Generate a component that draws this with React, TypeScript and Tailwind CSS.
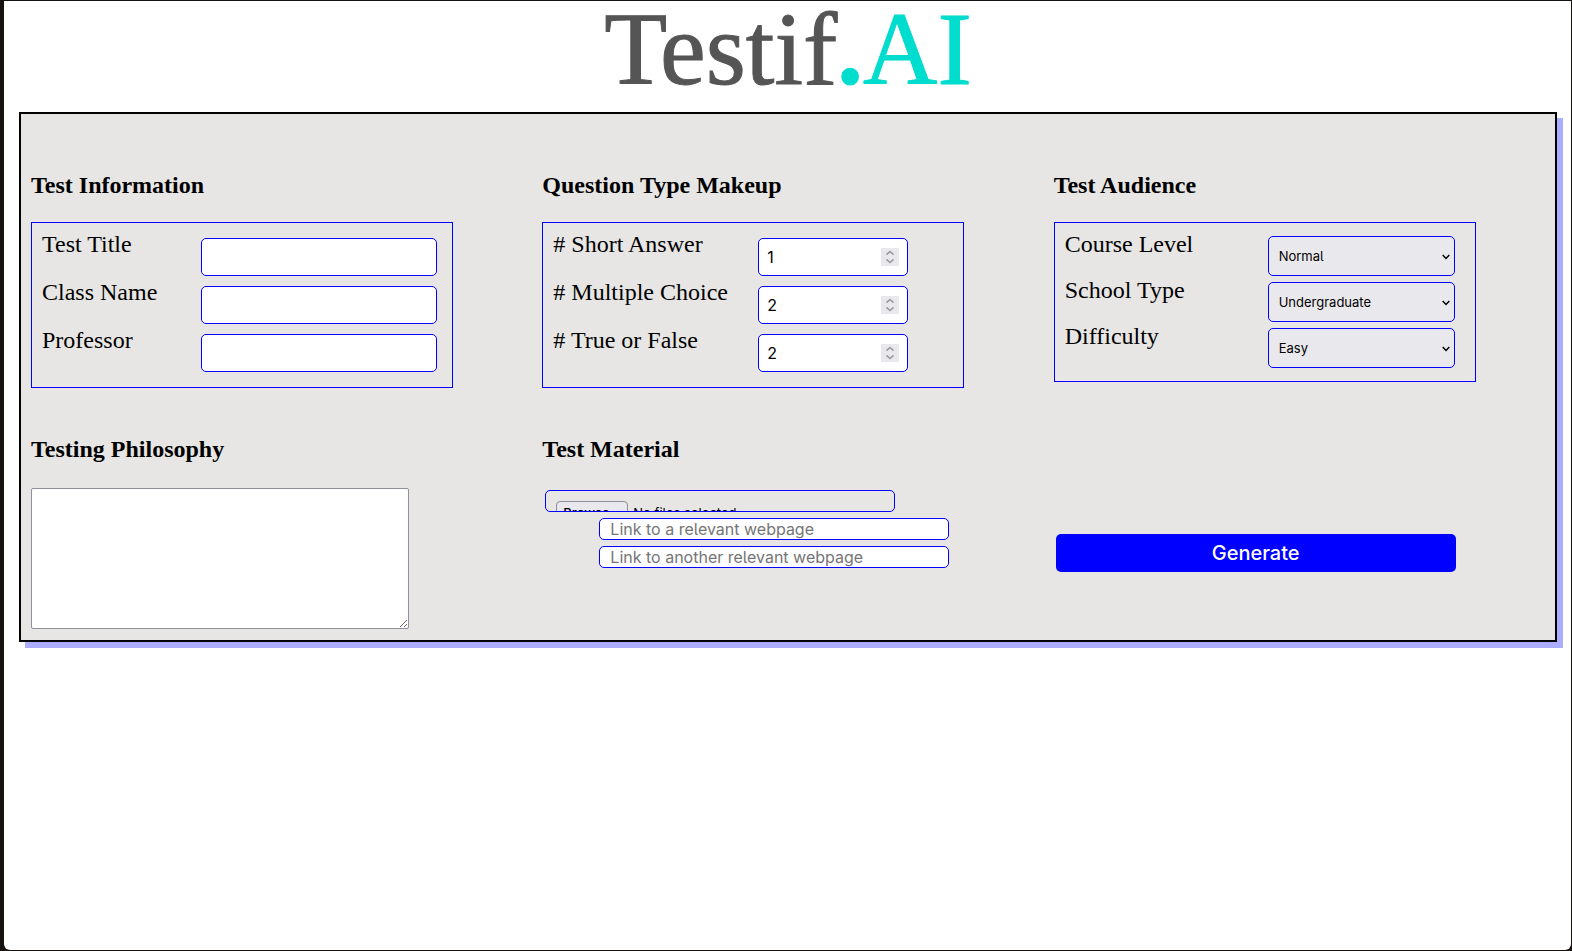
import type { ReactNode } from "react";

const heading = "text-2xl leading-7 font-bold";
const uiFont = "font-['Inter',sans-serif] [font-feature-settings:'cv05']";
const field = "border border-[#0000ff] rounded-[5px] bg-white text-base outline-none";
const rowLabel = "shrink-0 text-2xl leading-[22px] [text-rendering:optimizeLegibility]";

function Fieldset({ title, children }: { title: string; children: ReactNode }) {
  return (
    <section className="pl-2.5">
      <h2 className={heading}>{title}</h2>
      <div className="mt-[23px] w-[422px] max-w-full border border-[#0000ff] p-2.5">{children}</div>
    </section>
  );
}

function TextRow({ id, label }: { id: string; label: string }) {
  return (
    <div className="flex items-start">
      <label htmlFor={id} className={`w-[159px] ${rowLabel}`}>{label}</label>
      <input id={id} type="text" className={`my-[5px] h-[38px] w-[236px] min-w-0 px-2 ${field} ${uiFont}`} />
    </div>
  );
}

function NumberRow({ id, label, value }: { id: string; label: string; value: number }) {
  return (
    <div className="flex items-start">
      <label htmlFor={id} className={`w-[205px] ${rowLabel}`}>{label}</label>
      <div className={`my-[5px] flex h-[38px] w-[150px] items-center px-2 ${field}`}>
        <input
          id={id}
          type="number"
          defaultValue={value}
          className={`min-w-0 flex-1 text-base outline-none [appearance:textfield] [&::-webkit-inner-spin-button]:appearance-none ${uiFont}`}
        />
        <svg viewBox="0 0 18 18" className="h-[18px] w-[18px] bg-[#e9e9ed]" fill="none" stroke="#9a9aa5" strokeWidth="1.6" aria-hidden="true">
          <path d="M5.5 6.7 9 3.5l3.5 3.2M5.5 11.3 9 14.5l3.5-3.2" />
        </svg>
      </div>
    </div>
  );
}

function SelectRow({ id, label, options }: { id: string; label: string; options: string[] }) {
  return (
    <div className="flex items-start">
      <label htmlFor={id} className={`w-[203px] ${rowLabel}`}>{label}</label>
      <div className="my-[3px] grid w-[187px] items-center">
        <select
          id={id}
          className={`col-start-1 row-start-1 h-10 w-full appearance-none rounded-[5px] border border-[#0000ff] bg-[#e9e9ed] px-2.5 pt-0.5 text-[13px] ${uiFont}`}
        >
          {options.map((o) => (
            <option key={o}>{o}</option>
          ))}
        </select>
        <svg viewBox="0 0 8 6" className="pointer-events-none col-start-1 row-start-1 mt-0.5 mr-[5px] h-1.5 w-2 justify-self-end" fill="none" stroke="#000" strokeWidth="1.5" aria-hidden="true">
          <path d="M.7 1 4 4.4 7.3 1" />
        </svg>
      </div>
    </div>
  );
}

export default function App() {
  return (
    <div className="flex min-h-screen flex-col bg-[#15120f] pt-px pr-px pb-px pl-1 font-['Liberation_Serif',serif] text-black">
      <main className="flex-1 rounded-b-md bg-white pr-3.5 pl-[15px]">
        <h1 className="h-[111px] text-center text-[103px] leading-24 text-[#555555] [-webkit-text-stroke:1px_currentColor]">
          Testif<span className="text-[#00dccd]"><b>.</b>AI</span>
        </h1>
        <form
          onSubmit={(e) => e.preventDefault()}
          className="grid grid-cols-3 gap-y-[47px] border-2 border-black bg-[#e7e6e4] pt-[57px] pb-[11px] shadow-[6px_6px_0_#adadff]"
        >
          <Fieldset title="Test Information">
            <TextRow id="title" label="Test Title" />
            <TextRow id="class" label="Class Name" />
            <TextRow id="professor" label="Professor" />
          </Fieldset>
          <Fieldset title="Question Type Makeup">
            <NumberRow id="short" label="# Short Answer" value={1} />
            <NumberRow id="multiple" label="# Multiple Choice" value={2} />
            <NumberRow id="truefalse" label="# True or False" value={2} />
          </Fieldset>
          <Fieldset title="Test Audience">
            <SelectRow id="level" label="Course Level" options={["Normal", "Honors"]} />
            <SelectRow id="school" label="School Type" options={["Undergraduate", "Graduate"]} />
            <SelectRow id="difficulty" label="Difficulty" options={["Easy", "Medium", "Hard"]} />
          </Fieldset>

          <section className="pl-2.5">
            <h2 className={heading}>
              <label htmlFor="philosophy">Testing Philosophy</label>
            </h2>
            <textarea id="philosophy" className="mt-[25px] block h-[141px] w-[378px] max-w-full resize rounded-xs border border-[#8f8f9d] bg-white outline-none" />
          </section>

          <section className="pl-2.5">
            <h2 className={heading}>Test Material</h2>
            <div className={`mt-[27px] ml-[3px] flex flex-col items-start gap-1.5 ${uiFont}`}>
              <label className="flex h-[22px] w-[350px] items-start gap-[5px] overflow-hidden rounded-[5px] border border-[#0000ff] px-2.5 pt-2.5 text-[13px] leading-4">
                <input type="file" multiple className="sr-only" />
                <span className="w-[72px] shrink-0 rounded-sm border border-[#8f8f9d] bg-[#e9e9ed] px-1.5 py-[3px] font-medium">Browse...</span>
                <span className="py-1">No files selected.</span>
              </label>
              <input type="url" aria-label="First link" placeholder="Link to a relevant webpage" className={`ml-[54px] h-[22px] w-[350px] px-2.5 placeholder:text-[#757575] ${field}`} />
              <input type="url" aria-label="Second link" placeholder="Link to another relevant webpage" className={`ml-[54px] h-[22px] w-[350px] px-2.5 placeholder:text-[#757575] ${field}`} />
            </div>
          </section>

          <section className="flex items-center pl-3">
            <button type="submit" className={`mt-[42px] h-[38px] w-[400px] rounded-[5px] bg-[#0000ff] text-xl font-medium text-white ${uiFont}`}>
              Generate
            </button>
          </section>
        </form>
      </main>
    </div>
  );
}
